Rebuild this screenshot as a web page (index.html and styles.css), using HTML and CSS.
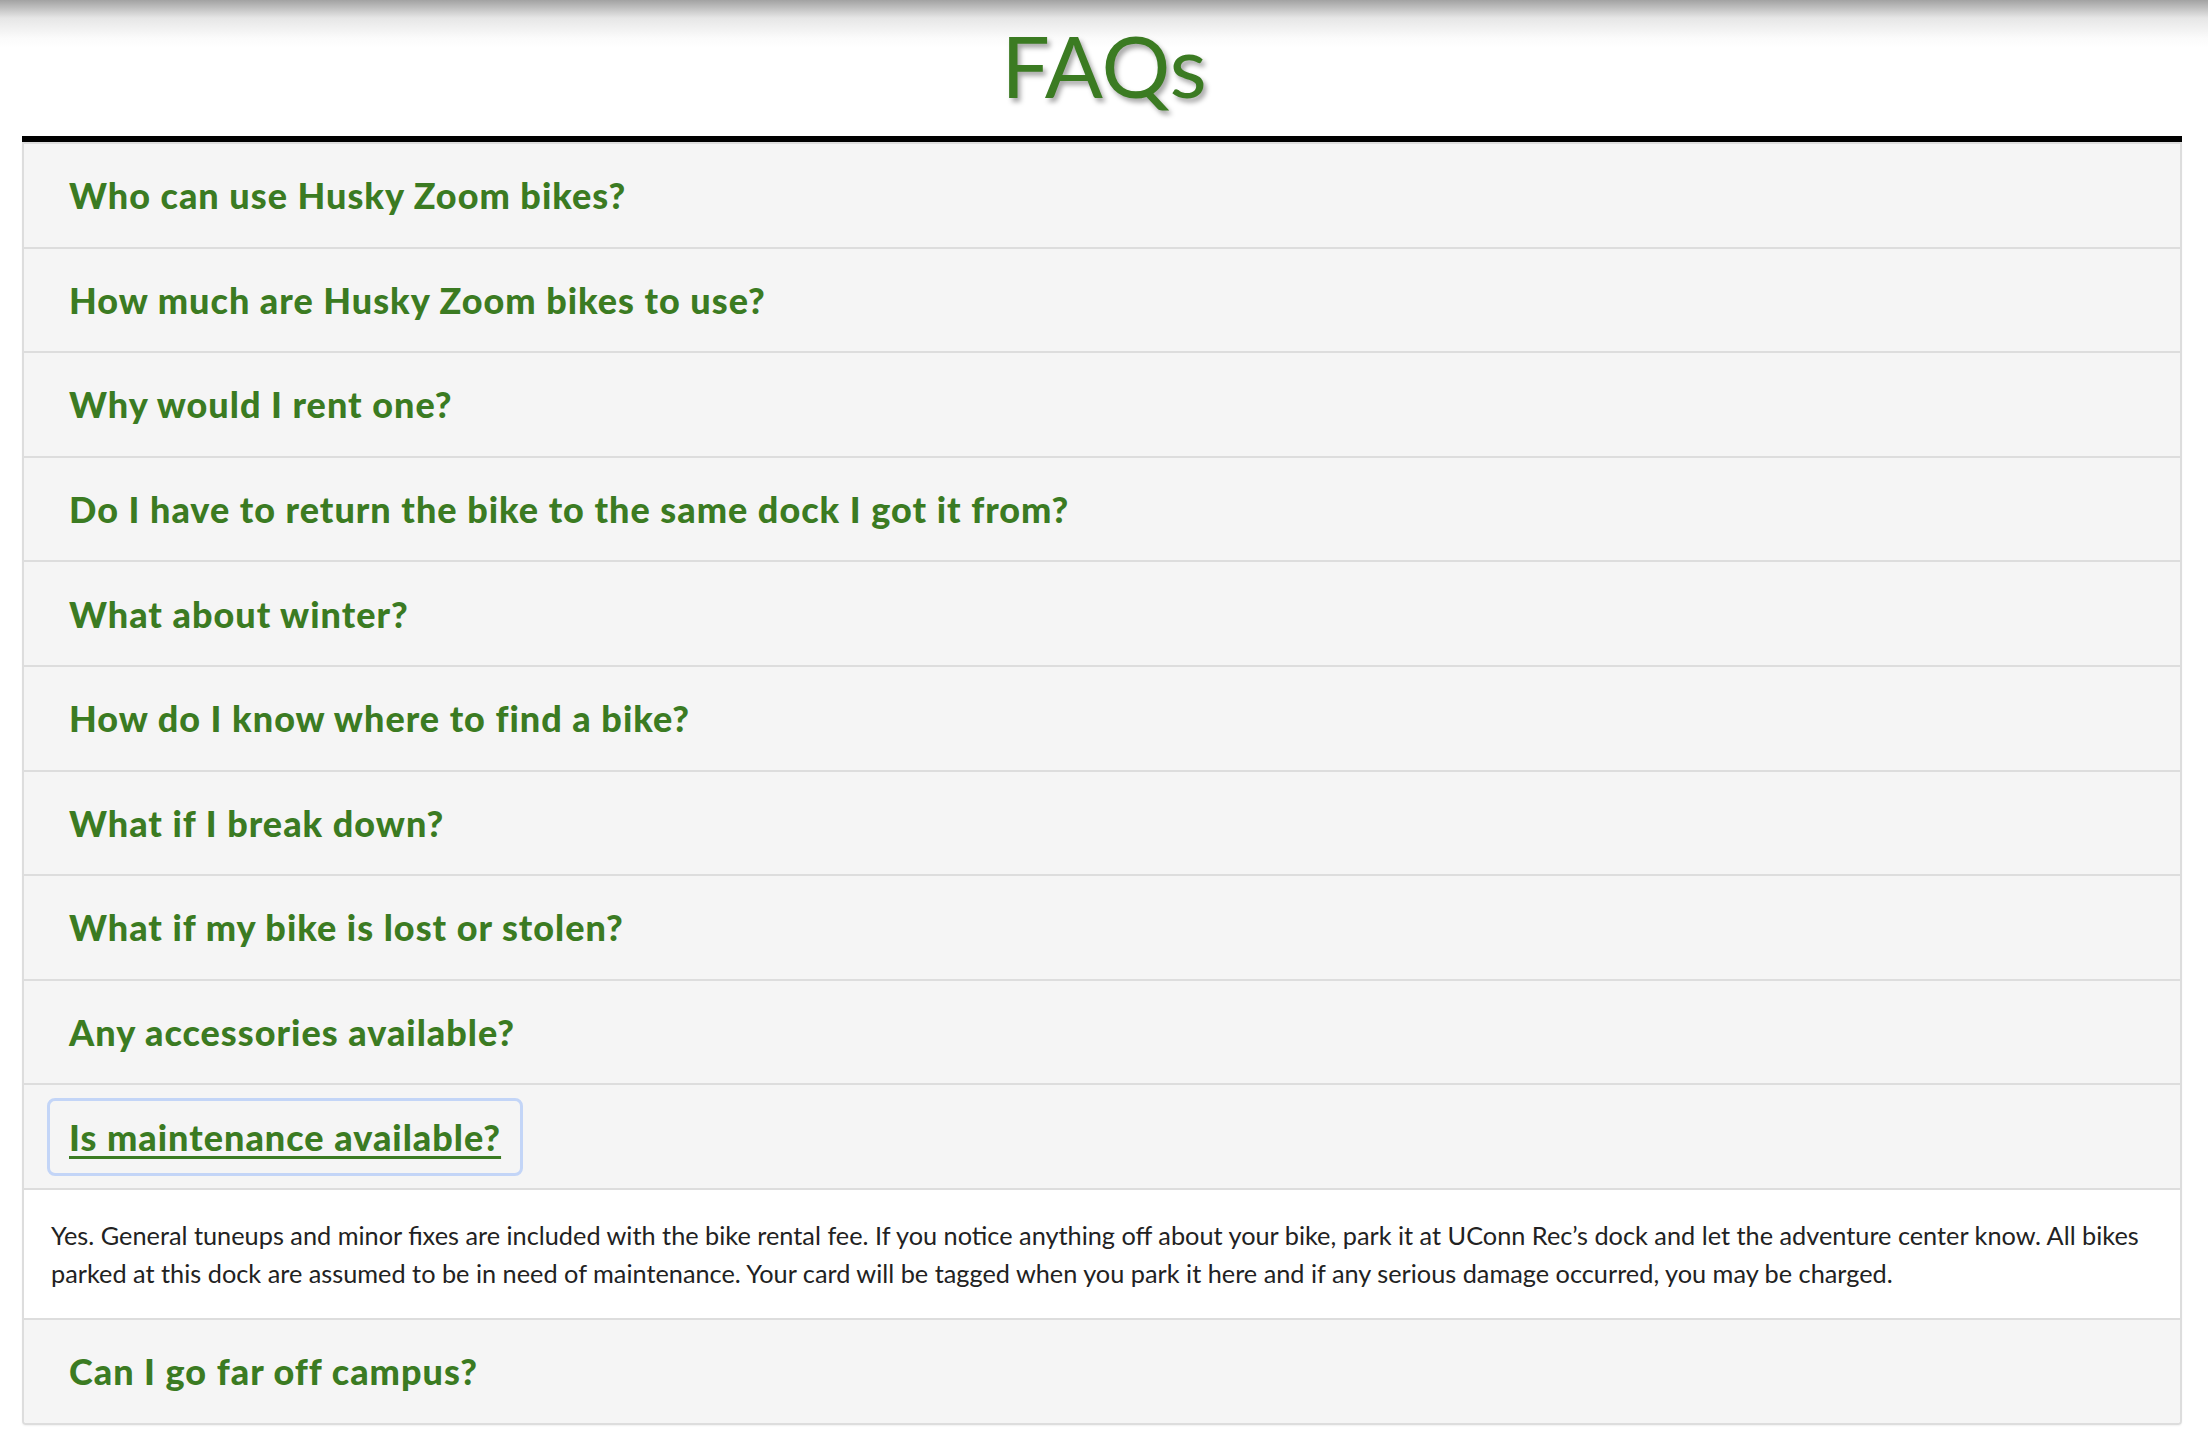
FILE: index.html
```html
<!DOCTYPE html>
<html lang="en">
<head>
<meta charset="utf-8">
<title>FAQs</title>
<link rel="stylesheet" href="styles.css">
</head>
<body>
<div class="page">
  <h1 class="title">FAQs</h1>
  <div class="faq">
    <div class="list">
      <div class="q"><a class="q-link" href="#">Who can use Husky Zoom bikes?</a></div>
      <div class="q"><a class="q-link" href="#">How much are Husky Zoom bikes to use?</a></div>
      <div class="q"><a class="q-link" href="#">Why would I rent one?</a></div>
      <div class="q"><a class="q-link" href="#">Do I have to return the bike to the same dock I got it from?</a></div>
      <div class="q"><a class="q-link" href="#">What about winter?</a></div>
      <div class="q"><a class="q-link" href="#">How do I know where to find a bike?</a></div>
      <div class="q"><a class="q-link" href="#">What if I break down?</a></div>
      <div class="q"><a class="q-link" href="#">What if my bike is lost or stolen?</a></div>
      <div class="q"><a class="q-link" href="#">Any accessories available?</a></div>
      <div class="q"><a class="q-link is-focused" href="#">Is maintenance available?</a></div>
      <div class="answer">Yes. General tuneups and minor fixes are included with the bike rental fee. If you notice anything off about your bike, park it at UConn Rec’s dock and let the adventure center know. All bikes parked at this dock are assumed to be in need of maintenance. Your card will be tagged when you park it here and if any serious damage occurred, you may be charged.</div>
      <div class="q q-last"><a class="q-link" href="#">Can I go far off campus?</a></div>
    </div>
  </div>
</div>
</body>
</html>
```

FILE: styles.css
```css
html, body {
  margin: 0;
  padding: 0;
  background: #fff;
}

.page {
  min-height: 1448px;
  background: linear-gradient(#a2a2a2 0px, #e6e6e6 18px, #fbfbfb 38px, #ffffff 48px) no-repeat;
  background-size: 100% 48px;
  font-family: Lato, "Open Sans", sans-serif;
  overflow: hidden;
}

.title {
  margin: 0;
  padding-top: 15px;
  height: 136px;
  box-sizing: border-box;
  text-align: center;
  font-family: Lato, sans-serif;
  font-weight: 400;
  font-size: 86px;
  line-height: 100px;
  color: #3b7b22;
  text-shadow: 3px 4px 5px rgba(0, 0, 0, 0.35);
}

.faq {
  margin: 0 26px 0 22px;
  border-top: 6px solid #000;
}

.list {
  border: 2px solid #dddddd;
  border-radius: 0 0 4px 4px;
  box-shadow: 0 1px 2px rgba(0, 0, 0, 0.06);
}

.q {
  background: #f5f5f5;
  padding: 12.3px 23px;
  border-bottom: 2px solid #dddddd;
}

.q-last {
  border-bottom: 0;
  border-radius: 0 0 3px 3px;
}

.q-link {
  display: inline-block;
  padding: 16px 19px;
  border: 3px solid transparent;
  border-radius: 8px;
  font-size: 36px;
  line-height: 40px;
  font-weight: 900;
  letter-spacing: 1px;
  color: #3b7b22;
  text-decoration: none;
}

.q-link.is-focused {
  border-color: #c3d5f7;
  text-decoration: underline;
  text-decoration-thickness: 3px;
  text-underline-offset: 5px;
}

.answer {
  background: #fff;
  padding: 26px 27px;
  border-bottom: 2px solid #dddddd;
  font-size: 25.3px;
  line-height: 38px;
  color: #222;
}
```
